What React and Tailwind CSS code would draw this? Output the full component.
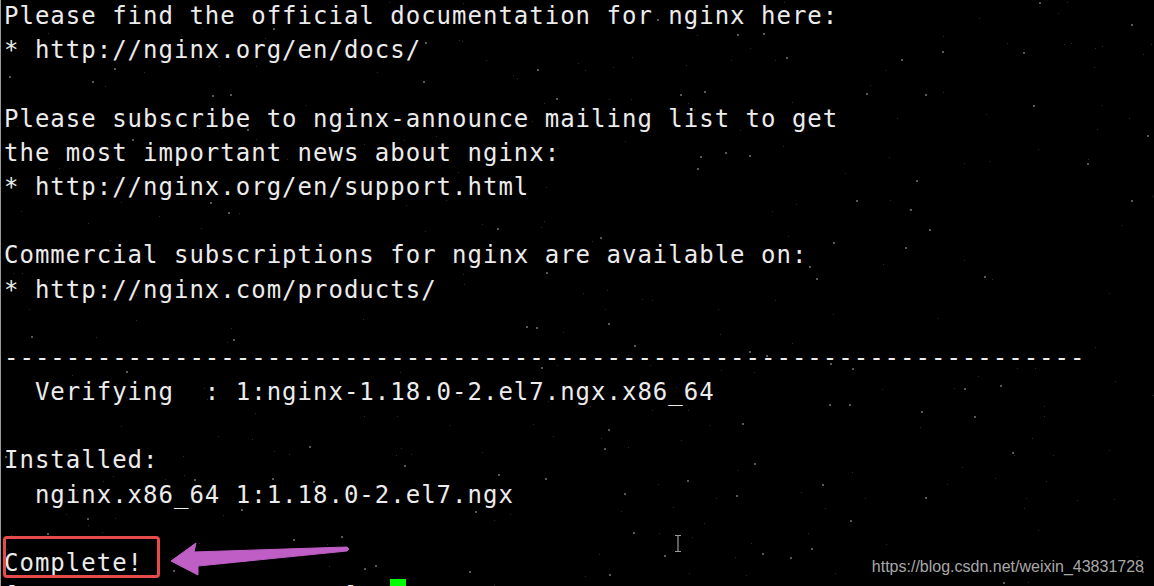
const lines = [
  'Please find the official documentation for nginx here:',
  '* http://nginx.org/en/docs/',
  '',
  'Please subscribe to nginx-announce mailing list to get',
  'the most important news about nginx:',
  '* http://nginx.org/en/support.html',
  '',
  'Commercial subscriptions for nginx are available on:',
  '* http://nginx.com/products/',
  '',
  '-'.repeat(70),
  '  Verifying  : 1:nginx-1.18.0-2.el7.ngx.x86_64',
  '',
  'Installed:',
  '  nginx.x86_64 1:1.18.0-2.el7.ngx',
  '',
  'Complete!',
];

// brighter specks read off the screenshot
const stars = [
  [1039,3],[1131,25],[942,52],[1023,53],[786,58],[901,60],[737,35],[763,34],[657,20],[425,43],
  [537,70],[423,82],[556,99],[680,95],[704,92],[866,94],[925,95],[1033,106],[1147,136],[700,157],
  [725,153],[749,156],[697,169],[916,181],[856,201],[1131,201],[497,229],[600,238],[929,230],[833,243],
  [905,248],[809,267],[984,277],[816,279],[546,273],[1087,164],[910,210],[608,324],[536,328],[526,327],
  [634,346],[749,352],[766,356],[830,364],[541,368],[852,369],[964,389],[1000,386],[829,405],[849,405],
  [921,412],[974,417],[742,424],[608,430],[604,449],[754,464],[1012,453],[498,475],[545,479],[687,481],
  [822,485],[736,496],[925,498],[850,521],[811,549],[790,558],[762,554],[664,556],[633,533],[469,572],
  [609,575],[475,512],[624,494],[114,69],[212,96],[230,95],[9,77],[92,82],[273,29],[132,140],
  [247,130],[228,213],[210,203],[233,340],[126,372],[309,447],[404,466],[5,457],[31,337],[194,480],
  [272,479],[313,482],[241,510],[293,540],[341,537],[364,569],[375,566],[173,571],[47,534],[87,519],
  [1003,583],[1142,572],
];

// faint dust, fixed seed so it stays the same every load
const dust = [];
let seed = 4242;
for (let i = 0; i < 260; i++) {
  seed = (seed * 16807) % 2147483647;
  const x = seed % 1154;
  seed = (seed * 16807) % 2147483647;
  dust.push([x, seed % 586]);
}

const Stars = () => (
  <svg className="absolute inset-0" width="1154" height="586">
    {dust.map(([x, y], i) => (
      <rect key={i} x={x} y={y} width="1" height="1" fill="#2c2c2c" />
    ))}
    {stars.map(([x, y], i) => (
      <circle key={i} cx={x} cy={y} r="1" fill="#777777" />
    ))}
  </svg>
);

const Annotation = () => (
  <svg className="absolute inset-0" width="1154" height="586">
    <polygon
      points="170,561 195,543 193,552 346,547 348,549 346,551 197,566 197,575"
      fill="#bf5fc6"
      stroke="#bf5fc6"
      strokeWidth="1"
      strokeLinejoin="round"
    />
    <path d="M674 535.5h6M677 535.5v16M674 551.5h6" stroke="#9a9a9a" strokeWidth="1.2" fill="none" />
  </svg>
);

const App = () => (
  <div className="relative w-[1154px] h-[586px] overflow-hidden bg-black border-l border-[#9a9a9a]">
    <Stars />
    <div className="relative -mt-px pl-[3px] font-['DejaVu_Sans_Mono',monospace] text-[24px] leading-[34.2px] tracking-[1px] text-[#ececec] whitespace-pre">
      {lines.map((line, i) => (
        <div key={i} className="h-[34.2px]">{line}</div>
      ))}
      <div className="h-[34.2px] -mt-[1.5px]">
        [root@VM-0-11-centos ~]#{' '}
        <span className="inline-block w-[15.4px] h-[34.2px] align-top bg-[#00ff00]"></span>
      </div>
    </div>
    <Annotation />
    <div className="absolute left-[2px] top-[536px] w-[157px] h-[42px] rounded-[4px] border-[3px] border-[#e54b4b]"></div>
    <div className="absolute right-[10px] top-[558px] font-['Liberation_Sans',sans-serif] text-[16px] leading-[18px] text-[#a8a8a8]">
      https://blog.csdn.net/weixin_43831728
    </div>
  </div>
);

export default App;
